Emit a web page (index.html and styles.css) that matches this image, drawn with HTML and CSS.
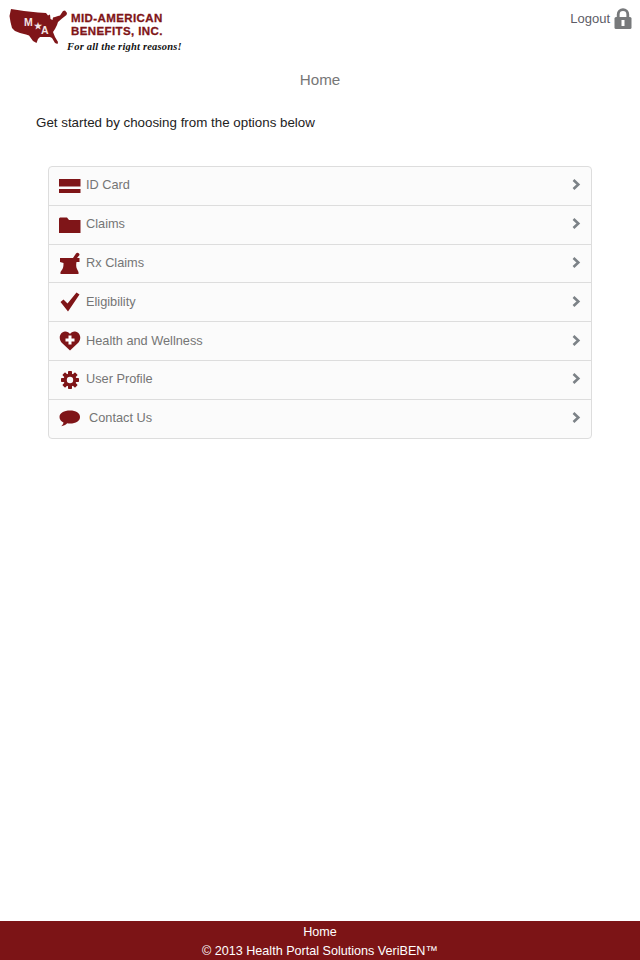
FILE: index.html
```html
<!DOCTYPE html>
<html lang="en">
<head>
<meta charset="UTF-8">
<meta name="viewport" content="width=device-width, initial-scale=1.0">
<title>Home</title>
<link rel="stylesheet" href="styles.css">
</head>
<body>

<div class="page">
  <div class="header">
    <a class="logo" href="#">
      <span class="logo-map">
        <svg width="60" height="38" viewBox="9 8 60 38">
          <path fill="#7f1518" d="M11 9 L24 11 L38 12.500 L46 13 L48 15.500 L50 14.500 L50.500 19 L52.500 20 L53 17.500 L55 17 L58 16 L60 15.500 L63 11 L65 10.500 L67 13 L66.500 15 L62 18.500 L58 22 L57 25 L55 29 L53 32 L55 37 L58 42 L57.500 44 L55 43 L52 38 L50 37 L44 37 L40 37 L38 39 L36.500 43 L33 41 L29 35.500 L26 34.500 L20 33 L15 31 L12 28 L10.500 22 L9.500 16 Z"/>
        </svg>
        <span class="logo-m">M</span>
        <span class="logo-star">★</span>
        <span class="logo-a">A</span>
      </span>
      <span class="logo-text">
        <span class="logo-name">MID-AMERICAN</span>
        <span class="logo-name">BENEFITS, INC.</span>
        <span class="logo-tag">For all the right reasons!</span>
      </span>
    </a>
    <a class="logout" href="#">
      Logout
      <svg width="18" height="21" viewBox="0 0 18 21">
        <path fill="none" stroke="#77797b" stroke-width="2.800" d="M4.200 10 V6.500 a4.800 4.800 0 0 1 9.600 0 V10"/>
        <rect x="0.500" y="9" width="17" height="12" rx="1.500" fill="#77797b"/>
        <rect x="7.500" y="12" width="3" height="6" fill="#fff"/>
      </svg>
    </a>
  </div>

  <h1 class="title">Home</h1>
  <p class="intro">Get started by choosing from the options below</p>

  <ul class="menu">
    <li><a href="#">
      <svg class="icon" width="22" height="14" viewBox="0 0 22 14"><path fill="#7f1518" d="M0 0h21.500v7.500H0zM0 10h21.500V14H0z"/></svg>
      <span>ID Card</span>
      <svg class="arrow" width="9" height="11" viewBox="0 0 9 11"><path fill="none" stroke="#7c8287" stroke-width="2.600" d="M1.500 1 L6.300 5.500 L1.500 10"/></svg>
    </a></li>
    <li><a href="#">
      <svg class="icon" width="22" height="16" viewBox="0 0 22 16"><path fill="#7f1518" d="M0 1.500 L1 0.500 H8 L10 3 H21.500 V16 H0 Z"/></svg>
      <span>Claims</span>
      <svg class="arrow" width="9" height="11" viewBox="0 0 9 11"><path fill="none" stroke="#7c8287" stroke-width="2.600" d="M1.500 1 L6.300 5.500 L1.500 10"/></svg>
    </a></li>
    <li><a href="#">
      <svg class="icon" width="22" height="23" viewBox="0 0 22 23"><path fill="#7f1518" d="M1 6 H14 L17 1.500 A2 2 0 0 1 20.500 3 L18 6 H20.500 V10 H17.500 C17 13 17 15 18 17 L19.500 20 V22 H1.500 V20 L3.500 17 C4.500 15 4.500 13 4.500 11 L1 10 Z"/></svg>
      <span>Rx Claims</span>
      <svg class="arrow" width="9" height="11" viewBox="0 0 9 11"><path fill="none" stroke="#7c8287" stroke-width="2.600" d="M1.500 1 L6.300 5.500 L1.500 10"/></svg>
    </a></li>
    <li><a href="#">
      <svg class="icon" width="22" height="20" viewBox="0 0 22 20"><path fill="#7f1518" d="M1.500 10 L4.500 7.500 L8.500 11.500 L17.500 0.500 L20.500 2.500 L9 19.500 Z"/></svg>
      <span>Eligibility</span>
      <svg class="arrow" width="9" height="11" viewBox="0 0 9 11"><path fill="none" stroke="#7c8287" stroke-width="2.600" d="M1.500 1 L6.300 5.500 L1.500 10"/></svg>
    </a></li>
    <li><a href="#">
      <svg class="icon" width="22" height="20" viewBox="0 0 22 20">
        <path fill="#7f1518" d="M11 19.500 L2.500 11.500 C-1 7 1 1 6 0.500 C8 0.300 10 1.500 11 3 C12 1.500 14 0.300 16 0.500 C21 1 23 7 19.500 11.500 Z"/>
        <path fill="#fff" d="M9.500 4.500h3v3h3v3h-3v3h-3v-3h-3v-3h3z"/>
      </svg>
      <span>Health and Wellness</span>
      <svg class="arrow" width="9" height="11" viewBox="0 0 9 11"><path fill="none" stroke="#7c8287" stroke-width="2.600" d="M1.500 1 L6.300 5.500 L1.500 10"/></svg>
    </a></li>
    <li><a href="#">
      <svg class="icon" width="22" height="20" viewBox="0 0 22 20">
        <g fill="#7f1518" transform="translate(11 10)">
          <circle r="6.500"/>
          <rect x="-2" y="-9" width="4" height="18" rx=".8"/>
          <rect x="-2" y="-9" width="4" height="18" rx=".8" transform="rotate(45)"/>
          <rect x="-2" y="-9" width="4" height="18" rx=".8" transform="rotate(90)"/>
          <rect x="-2" y="-9" width="4" height="18" rx=".8" transform="rotate(135)"/>
          <circle r="3.200" fill="#fbfbfb"/>
        </g>
      </svg>
      <span>User Profile</span>
      <svg class="arrow" width="9" height="11" viewBox="0 0 9 11"><path fill="none" stroke="#7c8287" stroke-width="2.600" d="M1.500 1 L6.300 5.500 L1.500 10"/></svg>
    </a></li>
    <li><a href="#">
      <svg class="icon" width="22" height="17" viewBox="0 0 22 17"><path fill="#7f1518" d="M11 0.500 C17 0.500 21 3 21 7 C21 11 17 13.500 11 13.500 C10 13.500 9 13.400 8.200 13.300 C6.500 15 4.500 16 2.300 16.200 C3.500 15 4.300 13.800 4.500 12.500 C2 11.300 0.500 9.300 0.500 7 C0.500 3 5 0.500 11 0.500 Z"/></svg>
      <span class="contact">Contact Us</span>
      <svg class="arrow" width="9" height="11" viewBox="0 0 9 11"><path fill="none" stroke="#7c8287" stroke-width="2.600" d="M1.500 1 L6.300 5.500 L1.500 10"/></svg>
    </a></li>
  </ul>

  <div class="footer">
    <a href="#">Home</a>
    <div>© 2013 Health Portal Solutions VeriBEN™</div>
  </div>
</div>

</body>
</html>
```
FILE: styles.css
```css
* {
  box-sizing: border-box;
}
html, body {
  margin: 0;
  padding: 0;
}
body {
  background-color: #fff;
  font-family: "Liberation Sans", Arial, sans-serif;
  font-size: 14px;
}
a {
  text-decoration: none;
}
.page {
  display: flex;
  flex-direction: column;
  min-height: 960px;
}
.header {
  display: flex;
  justify-content: space-between;
  align-items: flex-start;
  height: 56px;
  padding: 8px 8px 0 9px;
}
.logo {
  display: flex;
  color: #7f1518;
}
.logo-map {
  position: relative;
  display: block;
  width: 60px;
  height: 46px;
}
.logo-m, .logo-star, .logo-a {
  position: absolute;
  color: #f3e4e4;
  font-weight: bold;
  font-size: 10.500px;
  line-height: 12px;
}
.logo-m {
  left: 15px;
  top: 8px;
}
.logo-star {
  left: 25px;
  top: 12px;
  font-size: 9px;
}
.logo-a {
  left: 32px;
  top: 16px;
}
.logo-text {
  display: flex;
  flex-direction: column;
  padding: 4px 0 0 2px;
}
.logo-name {
  font-size: 11.500px;
  line-height: 13px;
  font-weight: bold;
  letter-spacing: 0.400px;
  -webkit-text-stroke: 0.300px #7f1518;
}
.logo-tag {
  margin: 2px 0 0 -4px;
  color: #111;
  font-family: "Liberation Serif", serif;
  font-size: 10.500px;
  line-height: 13px;
  font-style: italic;
  font-weight: bold;
  letter-spacing: 0.200px;
}
.logout {
  display: flex;
  align-items: center;
  gap: 4px;
  color: #5c5c66;
  font-size: 13px;
}
.title {
  margin: 15px 0 0 0;
  color: #777;
  font-size: 15.200px;
  font-weight: normal;
  line-height: 18px;
  text-align: center;
}
.intro {
  margin: 26px 0 0 36px;
  color: #222;
  font-size: 13.350px;
  line-height: 16px;
}
.menu {
  margin: 35px 48px 0 48px;
  padding: 0;
  list-style: none;
  border: 1px solid #ddd;
  border-radius: 4px;
  background-color: #fbfbfb;
}
.menu li {
  height: 38.800px;
  border-top: 1px solid #ddd;
}
.menu li:first-child {
  height: 37.800px;
  border-top: 0;
}
.menu a {
  display: flex;
  align-items: center;
  height: 100%;
  padding: 0 10px 2px 10px;
  color: #757575;
  font-size: 12.750px;
}
.icon {
  flex: none;
  margin: 2px 5px 0 0;
}
.contact {
  margin-left: 3px;
}
.arrow {
  flex: none;
  margin-left: auto;
}
.footer {
  margin-top: auto;
  height: 39px;
  padding-top: 2px;
  background-color: #7c1416;
  color: #fff;
  font-size: 12.600px;
  line-height: 19px;
  text-align: center;
}
.footer a {
  color: #fff;
}
```
